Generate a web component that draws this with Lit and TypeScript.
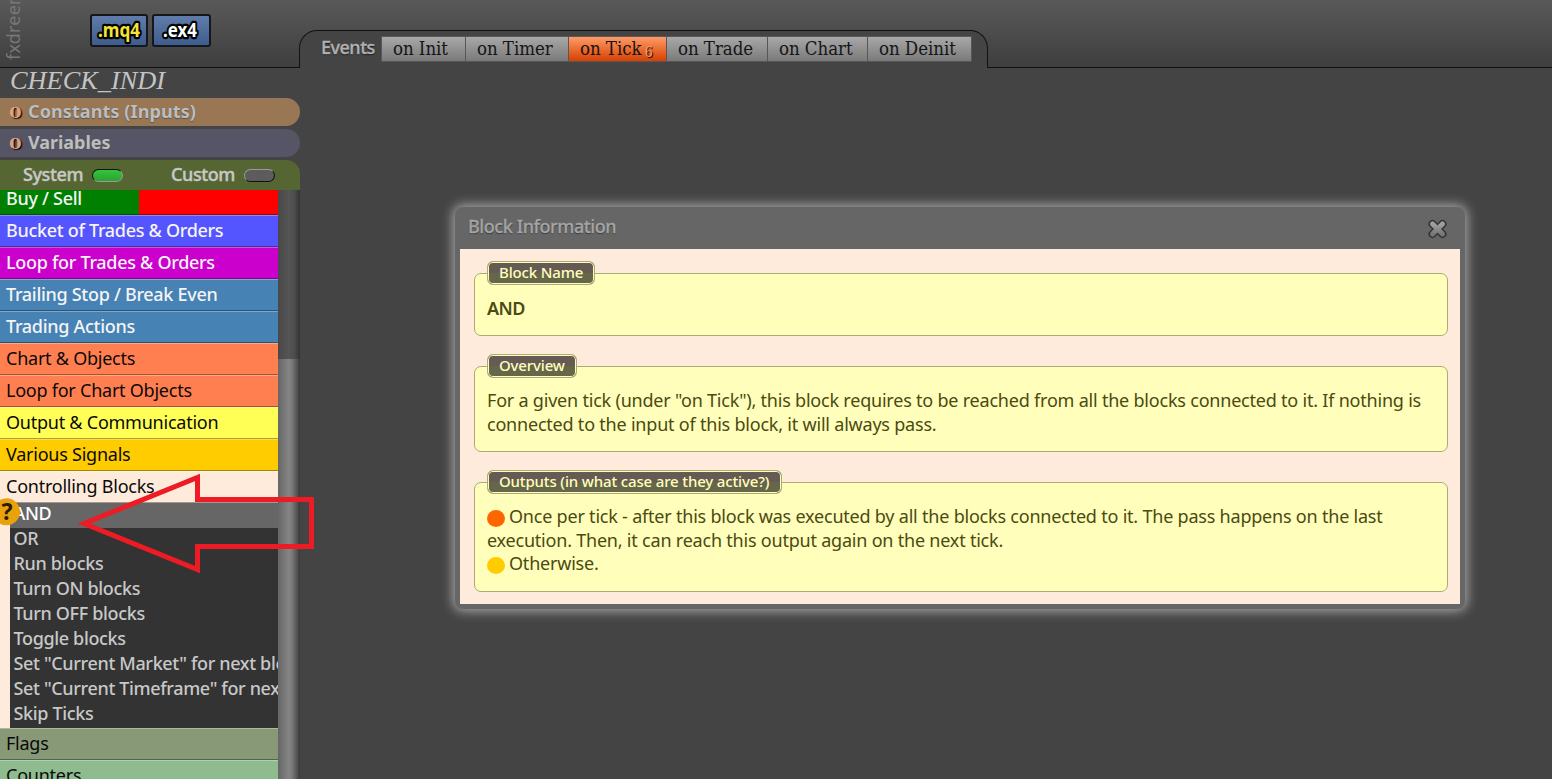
import { LitElement, html, css, svg } from "lit";
import { customElement } from "lit/decorators.js";

const EVENTS = [
  { name: "on Init", cls: "e1" },
  { name: "on Timer", cls: "e2" },
  { name: "on Tick", cls: "e3 active", count: 6 },
  { name: "on Trade", cls: "e4" },
  { name: "on Chart", cls: "e5" },
  { name: "on Deinit", cls: "e6" },
];
const TOP = [
  ["Buy / Sell", "buysell light"],
  ["Bucket of Trades & Orders", "bucket light"],
  ["Loop for Trades & Orders", "loop light"],
  ["Trailing Stop / Break Even", "steel light"],
  ["Trading Actions", "steel light"],
  ["Chart & Objects", "coral"],
  ["Loop for Chart Objects", "coral"],
  ["Output & Communication", "yellow"],
  ["Various Signals", "gold"],
  ["Controlling Blocks", "peach"],
];
const BLOCKS = ["AND", "OR", "Run blocks", "Turn ON blocks", "Turn OFF blocks", "Toggle blocks",
  'Set "Current Market" for next blocks', 'Set "Current Timeframe" for next blocks', "Skip Ticks"];

@customElement("top-bar")
class TopBar extends LitElement {
  static styles = css`
    :host { display: flex; height: 68px; background: linear-gradient(#595959, #3e3e3e); font-family: "Noto Sans", sans-serif; }
    .left { box-sizing: border-box; width: 300px; border-bottom: 1px solid #111; display: flex; align-items: flex-start; overflow: hidden; }
    .brand { width: 26px; height: 60px; margin-right: 64px; writing-mode: vertical-rl; transform: rotate(180deg); font-size: 18px; line-height: 26px; letter-spacing: 0.2px; color: #777; white-space: nowrap; }
    .btn { box-sizing: border-box; width: 58px; height: 33px; margin: 14px 4px 0 0; border: 2px solid #15171c; border-radius: 3px; background: linear-gradient(#5f7cab, #3f5d8c); display: block; }
    .btn.wide { width: 59px; }
    .btn svg { display: block; }
    .btn text { font: 700 20px "Noto Sans", sans-serif; paint-order: stroke; stroke: #000; stroke-width: 4.5px; stroke-linejoin: round; }
    .mq { fill: #f5e532; }
    .ex { fill: #fff; }
    .tab { box-sizing: border-box; width: 689px; height: 38px; margin: 30px 0 0 -1px; background: #444; border: 1px solid #111; border-bottom: 0; border-radius: 18px 18px 0 0; display: flex; align-items: flex-start; padding: 5px 0 0 21px; }
    .label { width: 60px; font-size: 18px; line-height: 22px; letter-spacing: -0.5px; font-weight: 500; color: #b0b0b0; -webkit-text-stroke: 0.4px #b0b0b0; text-shadow: 0 1px 1px #111; }
    .events { display: flex; border: 1px solid #575757; }
    .ev { box-sizing: border-box; height: 24px; padding-left: 11px; border-right: 1px solid #575757; background: linear-gradient(#a8a8a8, #7a7a7a); font: 18.5px/24px "DejaVu Serif", serif; font-stretch: condensed; letter-spacing: -0.05px; color: #151515; white-space: nowrap; }
    .ev:last-child { border-right: 0; }
    .e1 { width: 84px; } .e2 { width: 103px; } .e3 { width: 98px; } .e4 { width: 101px; } .e5 { width: 100px; } .e6 { width: 103px; }
    .active { background: linear-gradient(#ff9b66, #d84000); }
    .count { font-size: 14px; color: #e6a079; text-shadow: 1px 1px 1px #000; position: relative; top: 2px; margin-left: -2px; }
    .rest { flex: 1; border-bottom: 1px solid #111; height: 67px; }
  `;
  render() {
    return html`<div class="left">
        <div class="brand">fxdreema</div>
        <div class="btn"><svg width="54" height="29"><text class="mq" x="6" y="21" textLength="42" lengthAdjust="spacingAndGlyphs">.mq4</text></svg></div>
        <div class="btn wide"><svg width="54" height="29"><text class="ex" x="9" y="21" textLength="34" lengthAdjust="spacingAndGlyphs">.ex4</text></svg></div>
      </div>
      <div class="tab"><div class="label">Events</div>
        <div class="events">${EVENTS.map((e) => html`<div class="ev ${e.cls}">${e.name}${e.count ? html` <span class="count">${e.count}</span>` : ""}</div>`)}</div>
      </div>
      <div class="rest"></div>`;
  }
}

@customElement("side-panel")
class SidePanel extends LitElement {
  static styles = css`
    :host { display: flex; flex-direction: column; width: 300px; height: 711px; overflow: hidden; background: #444; font-family: "Noto Sans", sans-serif; font-size: 18px; }
    .project { height: 30px; padding-left: 10px; }
    .project svg { display: block; }
    .project text { font: italic 25px "Liberation Serif", serif; fill: #c4c4c4; }
    .bar { box-sizing: border-box; height: 28px; line-height: 27px; margin-bottom: 3px; border-radius: 0 14px 14px 0; display: flex; padding-left: 9px; font-weight: 700; color: #bdbdbd; text-shadow: 0 1px 1px #555; letter-spacing: 0.1px; }
    .constants { background: #997755; }
    .variables { background: #555566; letter-spacing: -0.05px; }
    .zero { width: 19px; font: 700 14px/30px "DejaVu Serif", serif; color: #e0a080; text-shadow: 1px 1px 1px #000; }
    .zero span { display: inline-block; transform: scaleX(1.3); transform-origin: 0 50%; }
    .modes { box-sizing: border-box; height: 30px; background: #556633; border-radius: 0 14px 0 0; display: flex; align-items: center; padding-left: 23px; font-weight: 500; color: #c8c8c8; -webkit-text-stroke: 0.4px #c8c8c8; line-height: 28px; letter-spacing: -0.4px; }
    .mode { display: flex; align-items: center; }
    .sys { width: 148px; }
    .name { line-height: 28px; margin-top: -3px; }
    .sys .name { width: 69px; } .cus .name { width: 73px; }
    .lamp { box-sizing: border-box; width: 31px; height: 13px; border-radius: 7px; border: 1px solid; border-color: #111 #999 #999 #111; background: linear-gradient(#36c43c, #2ca232); }
    .cus .lamp { background: #5c5c5c; border-color: #999 #111 #111 #999; }
    .scroll { flex: 1; display: flex; overflow: hidden; }
    .list { width: 278px; overflow: hidden; margin-top: -7px; }
    .row { box-sizing: border-box; height: 32px; padding-left: 6px; line-height: 29px; border-top: 1px solid rgba(255,255,255,.3); border-bottom: 1px solid rgba(0,0,0,.35); color: #0a0a0a; white-space: nowrap; letter-spacing: -0.24px; }
    .light { color: #f4f4f4; font-weight: 500; letter-spacing: -0.3px; }
    .buysell { background: linear-gradient(90deg, #008000 139.5px, #f00 139.5px); }
    .bucket { background: #5555ff; } .loop { background: #cc00cc; } .steel { background: #4682b4; } .coral { background: #ff7f50; }
    .yellow { background: #ffff55; } .gold { background: #ffcc00; } .peach { background: #feebdc; } .flags { background: #889977; } .counters { background: #8fbc8f; }
    .blocks { border-left: 10px solid #feebdc; background: #333; }
    .block { height: 25px; line-height: 20px; padding-left: 3.5px; color: #c8c8c8; font-weight: 500; letter-spacing: -0.35px; white-space: nowrap; overflow: hidden; }
    .block.on { background: #666; color: #fff; }
    .track { flex: 1; padding-top: 169px; background: linear-gradient(90deg, #484848, #555 50%, #4c4c4c 75%, #333); }
    .thumb { height: 420px; background: linear-gradient(90deg, #666, #858585 50%, #777 65%, #444 95%, #333); }
  `;
  render() {
    return html`<div class="project"><svg width="180" height="30"><text x="0" y="21" textLength="155" lengthAdjust="spacingAndGlyphs">CHECK_INDI</text></svg></div>
      <div class="bar constants"><span class="zero"><span>0</span></span><span>Constants (Inputs)</span></div>
      <div class="bar variables"><span class="zero"><span>0</span></span><span>Variables</span></div>
      <div class="modes">
        <div class="mode sys"><span class="name">System</span><span class="lamp"></span></div>
        <div class="mode cus"><span class="name">Custom</span><span class="lamp"></span></div>
      </div>
      <div class="scroll"><div class="list">
        ${TOP.map(([t, c]) => html`<div class="row ${c}">${t}</div>`)}
        <div class="blocks">${BLOCKS.map((t, i) => html`<div class="block ${i === 0 ? "on" : ""}">${t}</div>`)}</div>
        <div class="row flags">Flags</div><div class="row counters">Counters</div>
      </div><div class="track"><div class="thumb"></div></div></div>`;
  }
}

@customElement("block-info")
class BlockInfo extends LitElement {
  static styles = css`
    :host { box-sizing: border-box; display: block; width: 1010px; height: 402px; background: #666; border-radius: 8px; box-shadow: 0 0 12px 2px #aaa; padding: 0 5px; font-family: "Noto Sans", sans-serif; }
    .head { height: 42px; display: flex; justify-content: space-between; padding: 0 12px 0 8px; }
    .title { font-size: 18px; line-height: 39px; font-weight: 500; color: #a4a4a4; -webkit-text-stroke: 0.3px #a4a4a4; text-shadow: 0 1px 1px #333; letter-spacing: -0.42px; }
    .close { margin-top: 11px; }
    .body { box-sizing: border-box; height: 355px; background: #feebdc; padding: 12px 12px 0 14px; }
    .set { margin-bottom: 18px; }
    .legend { box-sizing: border-box; height: 24px; margin: 0 0 -12px 13px; padding-left: 11px; position: relative; font-size: 15px; line-height: 20px; font-weight: 500; color: #ffffbb; border: 1px solid #aaaa77; border-radius: 6px; background: linear-gradient(#665a55 50%, #66664a 50%); white-space: nowrap; letter-spacing: -0.15px; box-shadow: inset 0 0 0 1px #ffffbb; }
    .l1 { width: 108px; } .l2 { width: 90px; } .l3 { width: 295px; letter-spacing: -0.15px; }
    .box { box-sizing: border-box; border: 1px solid #aaaa77; border-radius: 7px; background: #ffffbb; color: #4a4a12; padding: 21px 12px 0; font-size: 18px; line-height: 24px; white-space: nowrap; letter-spacing: -0.21px; }
    .b1 { height: 63px; font-weight: 600; padding-top: 22px; letter-spacing: -0.6px; }
    .b2 { height: 86px; }
    .b3 { height: 110px; }
    .line { display: flex; height: 24px; }
    .last { margin-top: -1px; }
    .dot { width: 18px; height: 17px; border-radius: 50%; margin: 6px 4px 0 0; background: #ff6600; }
    .amber { background: #ffcc00; }
  `;
  render() {
    return html`<div class="head"><span class="title">Block Information</span>
        <svg class="close" width="21" height="22" viewBox="0 0 21 22">
          <defs><linearGradient id="x" x2="0" y2="1"><stop stop-color="#a0a0a0"/><stop offset="1" stop-color="#777"/></linearGradient></defs>
          <path d="M5.500 6 15.500 16M15.500 6 5.500 16" fill="none" stroke="#333" stroke-width="8" stroke-linecap="round"/>
          <path d="M5.500 6 15.500 16M15.500 6 5.500 16" fill="none" stroke="url(#x)" stroke-width="5" stroke-linecap="round"/>
        </svg></div>
      <div class="body">
        <div class="set"><div class="legend l1">Block Name</div><div class="box b1">AND</div></div>
        <div class="set"><div class="legend l2">Overview</div><div class="box b2">
          <div class="line">For a given tick (under "on Tick"), this block requires to be reached from all the blocks connected to it. If nothing is</div>
          <div class="line">connected to the input of this block, it will always pass.</div></div></div>
        <div class="set"><div class="legend l3">Outputs (in what case are they active?)</div><div class="box b3">
          <div class="line"><span class="dot"></span><span>Once per tick - after this block was executed by all the blocks connected to it. The pass happens on the last</span></div>
          <div class="line">execution. Then, it can reach this output again on the next tick.</div>
          <div class="line last"><span class="dot amber"></span><span>Otherwise.</span></div></div></div>
      </div>`;
  }
}

@customElement("app-root")
class AppRoot extends LitElement {
  static styles = css`
    :host { display: block; position: relative; width: 1552px; height: 779px; overflow: hidden; background: #444; }
    .main { display: flex; }
    .info { position: absolute; left: 455px; top: 207px; }
    .marks { position: absolute; left: 0; top: 470px; pointer-events: none; }
    .marks text { font: 700 23px "Noto Sans", sans-serif; fill: #2a1c00; }
  `;
  render() {
    return html`<top-bar></top-bar>
      <div class="main"><side-panel></side-panel></div>
      <block-info class="info"></block-info>
      <svg class="marks" width="320" height="110">
        ${svg`<circle cx="6.5" cy="41.8" r="13.5" fill="#e9a20c"/><text x="1.500" y="50">?</text>
        <path d="M84 53.5 197.5 7.500V29.500H311.500V76.500H197.500V99.500Z" fill="none" stroke="#ed1c24" stroke-width="5" stroke-linejoin="miter"/>`}
      </svg>`;
  }
}
